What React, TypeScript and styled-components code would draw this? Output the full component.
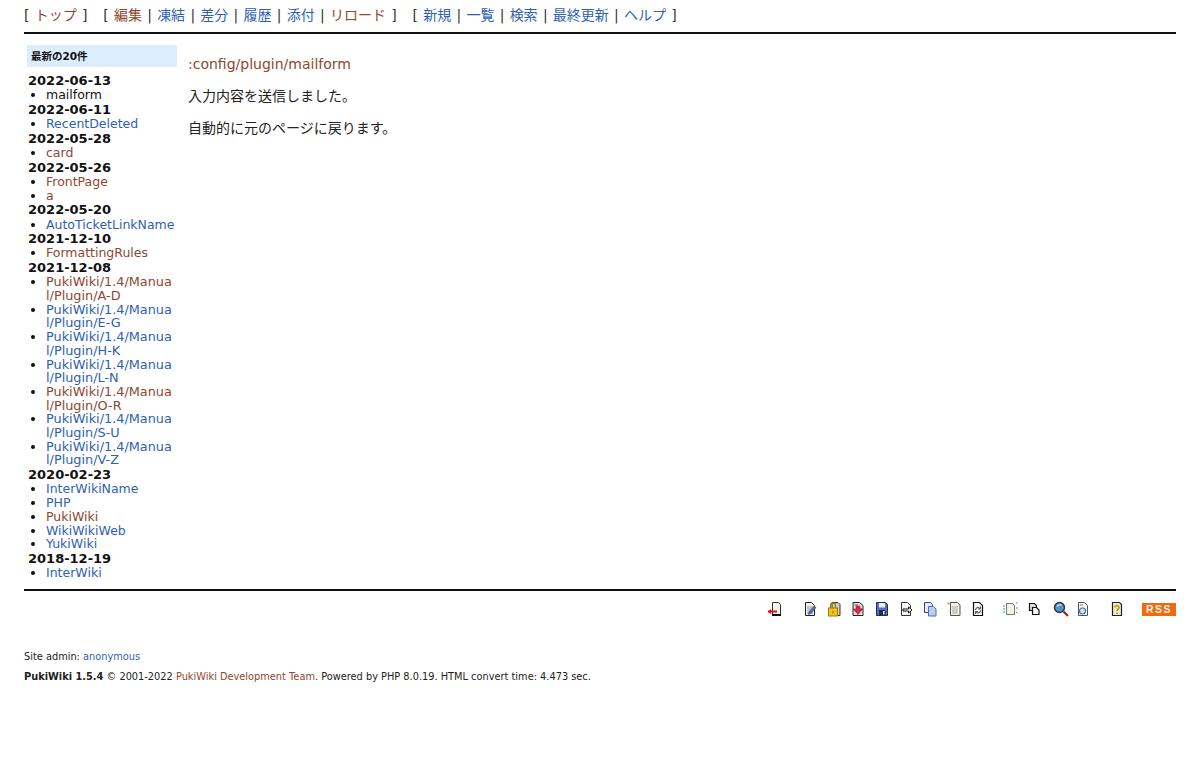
import React, { FC, ReactNode } from 'react';
import styled, { createGlobalStyle } from 'styled-components';

const BLUE = '#2f5fb0';
const BROWN = '#8f4630';

const GlobalStyle = createGlobalStyle`
    html, body {
        margin: 0;
        padding: 0;
        background: #fff;
    }
    body {
        color: #111;
        font-family: "DejaVu Sans", "Noto Sans CJK JP", sans-serif;
        font-size: 13px;
    }
`;

const Page = styled.div`
    padding: 0 24px;
    height: 777px;
    box-sizing: border-box;
`;

const Nav = styled.div`
    height: 32px;
    padding-top: 7px;
    box-sizing: border-box;
    line-height: 16px;
    font-size: 14px;
    word-spacing: 0.8px;
    color: #333;
    white-space: pre;
`;

const Rule = styled.div`
    height: 2px;
    background: #111;
`;

const Columns = styled.div`
    display: flex;
    height: 555px;
`;

const Side = styled.div`
    width: 153px;
    flex: none;
    padding: 11px 0 0 3px;
    box-sizing: border-box;
`;

const MenuTitle = styled.div`
    height: 22px;
    line-height: 22px;
    padding-left: 4px;
    background: #dcedfd;
    font-size: 10.5px;
    font-weight: bold;
    margin-bottom: 6px;
`;

const DateHead = styled.div`
    font-weight: bold;
    line-height: 15.2px;
    padding-left: 1px;
`;

const Pages = styled.ul`
    margin: 0;
    padding: 0 0 0 19px;
    line-height: 13.7px;
    font-size: 12.5px;
`;

const Item = styled.li<{ $wrapped?: boolean }>`
    white-space: pre-line;
    font-size: ${(props) => (props.$wrapped ? '12.85px' : 'inherit')};
`;

const Link = styled.a<{ $visited?: boolean }>`
    color: ${(props) => (props.$visited ? BROWN : BLUE)};
    text-decoration: none;
`;

const Body = styled.div`
    flex: 1;
    padding: 22px 0 0 11px;
    line-height: 16px;
    font-size: 14px;
    color: #222;
`;

const Para = styled.p`
    margin: 0 0 16px;
`;

const Toolbar = styled.div`
    display: flex;
    justify-content: flex-end;
    align-items: center;
    height: 20px;
    margin-top: 8px;
`;

const Slot = styled.span<{ $gap?: number }>`
    display: flex;
    justify-content: center;
    width: 24px;
    margin-left: ${(props) => props.$gap ?? 0}px;
`;

const Rss = styled.span`
    display: block;
    width: 34px;
    height: 13px;
    margin-left: 13px;
    background: #f26a0e;
    color: #f4efe8;
    font-family: "Liberation Sans", sans-serif;
    font-size: 10.5px;
    font-weight: bold;
    letter-spacing: 1.4px;
    line-height: 13px;
    text-align: center;
`;

const Footer = styled.div`
    margin-top: 32px;
    font-size: 9.8px;
    line-height: 12px;
    color: #222;
`;

const FootLine = styled.div`
    margin-bottom: 8px;
`;

const Sheet: FC = () => <path d="M3.5 1.5h6l3 3v10h-9z" fill="#f3f2e6" stroke="#222" />;

const Lines: FC = () => <path d="M5 6h6M5 8h6M5 10h6M5 12h6" stroke="#999" />;

const Icon: FC<{ children: ReactNode }> = ({ children }) => (
    <svg width={16} height={16} viewBox="0 0 16 16" fill="none">
        {children}
    </svg>
);

const icons: Array<{ gap?: number; draw: ReactNode }> = [
    {
        draw: (
            <>
                <path d="M5.5 1.5h6l2 2v11h-8z" fill="#f6f5ec" stroke="#333" />
                <path d="M1 10.500h9" stroke="#d8141a" strokeWidth="2" />
                <path d="M4 8v5L1 10.500z" fill="#d8141a" />
                <path d="M5 14h9" stroke="#111" strokeWidth="2" />
            </>
        ),
    },
    {
        gap: 11,
        draw: (
            <>
                <Sheet />
                <Lines />
                <path d="M7 11l5-6 2 1.5-5 6-2.5 1z" fill="#4a78c0" stroke="#26456f" strokeWidth="0.6" />
            </>
        ),
    },
    {
        draw: (
            <>
                <path d="M6 1.5h6l2 2v11H6z" fill="#c9d6c2" stroke="#333" />
                <path d="M4.500 7V4.500a2.500 2.500 0 0 1 5 0V7" stroke="#a37a10" strokeWidth="1.400" />
                <rect x="2.500" y="7" width="9" height="8" fill="#f3c415" stroke="#a37a10" />
                <path d="M7 10v2.500" stroke="#7a5a08" />
            </>
        ),
    },
    {
        draw: (
            <>
                <path d="M3 1.500h6.500l3.500 3v10H3z" fill="#e6e3dc" stroke="#222" />
                <path d="M4.500 4h3.500M10 8h2" stroke="#555" />
                <path d="M6 5h4v3h3L8 13.500 3 8h3z" fill="#d92a4a" stroke="#8c1530" strokeWidth="0.5" />
            </>
        ),
    },
    {
        draw: (
            <>
                <path d="M2.500 1.500h9l2 2v11h-11z" fill="#5a6fb5" stroke="#1d2a5c" />
                <rect x="5" y="2" width="6" height="4.500" fill="#eef0f8" />
                <rect x="5" y="9" width="6.500" height="5.500" fill="#1d2a5c" />
                <rect x="9" y="10" width="1.500" height="3.500" fill="#dfe3f2" />
            </>
        ),
    },
    {
        draw: (
            <>
                <path d="M3.500 1.500h6l3 3v10h-9z" fill="#f6f6f0" stroke="#333" />
                <path d="M5 8h5.500V6L14 9l-3.500 3v-2H5z" fill="#fff" stroke="#111" strokeWidth="1" />
            </>
        ),
    },
    {
        draw: (
            <>
                <path d="M2.500 1.500h6l2 2v8h-8z" fill="#e8eaf6" stroke="#34417e" />
                <path d="M6.500 5.500h5l2.500 2.500v7h-7.500z" fill="#b9cfee" stroke="#4a6fb5" />
            </>
        ),
    },
    {
        draw: (
            <>
                <path d="M4.500 1.500h7l2.500 2.500v10.500h-9.500z" fill="#f4f2e2" stroke="#555" />
                <path d="M6 6h6M6 8h6M6 10h6M6 12h6" stroke="#aaa" />
                <path d="M2.500 1v3M1 2.500h3M1.500 1.500l2 2M3.500 1.500l-2 2" stroke="#e8a63a" strokeWidth="0.7" />
            </>
        ),
    },
    {
        draw: (
            <>
                <path d="M3.500 1.500h6l3 3v10h-9z" fill="#f8f8f4" stroke="#111" strokeWidth="1.200" />
                <path d="M5.500 9a2.500 2.500 0 0 1 4.300-1.700M10.500 9.500a2.500 2.500 0 0 1-4.300 1.700" stroke="#333" />
                <path d="M10.500 5.500v2.500H8M5.500 13v-2.500H8" stroke="#333" strokeWidth="0.8" />
            </>
        ),
    },
    {
        gap: 8,
        draw: (
            <>
                <path d="M4.500 2.500h6l2 2v9h-8z" fill="#f4f3e6" stroke="#777" />
                <path
                    d="M1 5h2M1 8h2M1 11h2M14 2.500l1.500-1M14 7h2M14 11l1.500 1.500"
                    stroke="#3f8fc8"
                    strokeWidth="1"
                />
            </>
        ),
    },
    {
        draw: (
            <>
                <path d="M3.500 2.500h5l2 2v5h-7z" fill="#ddd" stroke="#111" strokeWidth="1.200" />
                <path d="M6.500 6.500h4l2.500 2.500v4.500h-6.500z" fill="#f6f6f6" stroke="#111" strokeWidth="1.200" />
            </>
        ),
    },
    {
        gap: 3,
        draw: (
            <>
                <circle cx="6.500" cy="6.500" r="5" fill="#4d94d4" stroke="#333" strokeWidth="1.400" />
                <path d="M4 5.500a3 3 0 0 1 4.500-1.200" stroke="#d7ecfb" strokeWidth="1.200" />
                <path d="M10.500 10.500l4.500 4.500" stroke="#8c2a2a" strokeWidth="2.200" />
            </>
        ),
    },
    {
        gap: -2,
        draw: (
            <>
                <path d="M3.500 1.500h6l3 3v10h-9z" fill="#f0f2f0" stroke="#555" />
                <circle cx="7.500" cy="10" r="3" fill="#cfe4ee" stroke="#3c7a98" strokeWidth="1.200" />
                <path d="M5 4h3" stroke="#888" />
            </>
        ),
    },
    {
        gap: 10,
        draw: (
            <>
                <path d="M3.500 1.500h7l2 2v11h-9z" fill="#eeeacc" stroke="#222" strokeWidth="1.200" />
                <path d="M6 6.500a2 2 0 1 1 3 1.800c-.8.500-1 .900-1 1.700" stroke="#b59a08" strokeWidth="1.600" />
                <path d="M8 11.500v1.500" stroke="#b59a08" strokeWidth="1.600" />
            </>
        ),
    },
];

interface RecentPage {
    name: string;
    visited?: boolean;
    plain?: boolean;
}

const manual = 'PukiWiki/1.4/Manua\nl/Plugin/';

const recent: Array<{ date: string; pages: RecentPage[] }> = [
    { date: '2022-06-13', pages: [{ name: 'mailform', plain: true }] },
    { date: '2022-06-11', pages: [{ name: 'RecentDeleted' }] },
    { date: '2022-05-28', pages: [{ name: 'card', visited: true }] },
    { date: '2022-05-26', pages: [{ name: 'FrontPage', visited: true }, { name: 'a', visited: true }] },
    { date: '2022-05-20', pages: [{ name: 'AutoTicketLinkName' }] },
    { date: '2021-12-10', pages: [{ name: 'FormattingRules', visited: true }] },
    {
        date: '2021-12-08',
        pages: [
            { name: manual + 'A-D', visited: true },
            { name: manual + 'E-G' },
            { name: manual + 'H-K' },
            { name: manual + 'L-N' },
            { name: manual + 'O-R', visited: true },
            { name: manual + 'S-U' },
            { name: manual + 'V-Z' },
        ],
    },
    {
        date: '2020-02-23',
        pages: [
            { name: 'InterWikiName' },
            { name: 'PHP' },
            { name: 'PukiWiki', visited: true },
            { name: 'WikiWikiWeb' },
            { name: 'YukiWiki' },
        ],
    },
    { date: '2018-12-19', pages: [{ name: 'InterWiki' }] },
];

const App: FC = () => (
    <Page>
        <GlobalStyle />
        <Nav>
            {'[ '}
            <Link $visited>トップ</Link>
            {' ]   [ '}
            <Link $visited>編集</Link>
            {' | '}
            <Link>凍結</Link>
            {' | '}
            <Link>差分</Link>
            {' | '}
            <Link>履歴</Link>
            {' | '}
            <Link>添付</Link>
            {' | '}
            <Link $visited>リロード</Link>
            {' ]   [ '}
            <Link>新規</Link>
            {' | '}
            <Link>一覧</Link>
            {' | '}
            <Link>検索</Link>
            {' | '}
            <Link>最終更新</Link>
            {' | '}
            <Link>ヘルプ</Link>
            {' ]'}
        </Nav>
        <Rule />
        <Columns>
            <Side>
                <MenuTitle>最新の20件</MenuTitle>
                {recent.map((group) => (
                    <React.Fragment key={group.date}>
                        <DateHead>{group.date}</DateHead>
                        <Pages>
                            {group.pages.map((page) => (
                                <Item key={page.name} $wrapped={page.name.includes('\n')}>
                                    {page.plain ? page.name : <Link $visited={page.visited}>{page.name}</Link>}
                                </Item>
                            ))}
                        </Pages>
                    </React.Fragment>
                ))}
            </Side>
            <Body>
                <Para>
                    <Link $visited>:config/plugin/mailform</Link>
                </Para>
                <Para>入力内容を送信しました。</Para>
                <Para>自動的に元のページに戻ります。</Para>
            </Body>
        </Columns>
        <Rule />
        <Toolbar>
            {icons.map((icon, i) => (
                <Slot key={i} $gap={icon.gap}>
                    <Icon>{icon.draw}</Icon>
                </Slot>
            ))}
            <Rss>RSS</Rss>
        </Toolbar>
        <Footer>
            <FootLine>
                Site admin: <Link>anonymous</Link>
            </FootLine>
            <FootLine>
                <strong>PukiWiki 1.5.4</strong> © 2001-2022 <Link $visited>PukiWiki Development Team</Link>. Powered by
                PHP 8.0.19. HTML convert time: 4.473 sec.
            </FootLine>
        </Footer>
    </Page>
);

export default App;
